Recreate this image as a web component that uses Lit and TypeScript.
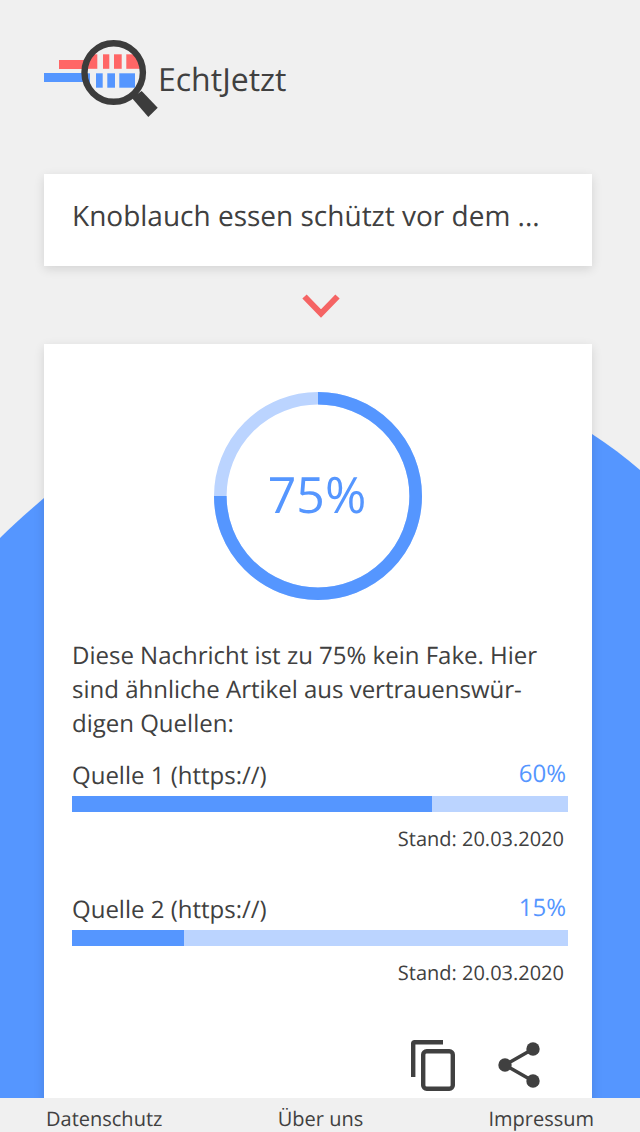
import { LitElement, html, css, svg } from 'lit';
import { customElement } from 'lit/decorators.js';

const sources = [
  { name: 'Quelle 1 (https://)', score: 60, fill: 72.6, date: '20.03.2020' },
  { name: 'Quelle 2 (https://)', score: 15, fill: 22.6, date: '20.03.2020' },
];

const logo = svg`
  <svg class="logo" width="116" height="80" viewBox="44 38 116 80">
    <defs>
      <clipPath id="lens"><circle cx="113.7" cy="72.5" r="28"></circle></clipPath>
    </defs>
    <rect x="59" y="60" width="30" height="9" fill="#f66"></rect>
    <rect x="44" y="73" width="44" height="9" fill="#5596ff"></rect>
    <circle cx="113.7" cy="72.5" r="29" fill="#f0f0f0"></circle>
    <g clip-path="url(#lens)">
      <rect x="84" y="54.3" width="13.3" height="14.5" fill="#f66"></rect>
      <rect x="103" y="54.3" width="6.3" height="14.5" fill="#f66"></rect>
      <rect x="114" y="54.3" width="7.7" height="14.5" fill="#f66"></rect>
      <rect x="126.3" y="54.3" width="20" height="14.5" fill="#f66"></rect>
      <rect x="84" y="73.3" width="6" height="14.4" fill="#5596ff"></rect>
      <rect x="96" y="73.3" width="6.7" height="14.4" fill="#5596ff"></rect>
      <rect x="107.3" y="73.3" width="7.7" height="14.4" fill="#5596ff"></rect>
      <rect x="119.3" y="73.3" width="15.7" height="14.4" fill="#5596ff"></rect>
    </g>
    <circle cx="113.7" cy="72.5" r="29.2" fill="none" stroke="#3c3c3c" stroke-width="6.4"></circle>
    <path d="M131.7 97.7 L141.7 91 L157.7 107.7 L148.3 117 Z" fill="#3c3c3c"></path>
  </svg>
`;

@customElement('app-root')
export class AppRoot extends LitElement {
  static styles = css`
    :host {
      display: flex;
      flex-direction: column;
      position: relative;
      height: 100vh;
      overflow: hidden;
      background: #f0f0f0;
      color: #404040;
      font-family: 'Open Sans', sans-serif;
      text-rendering: geometricPrecision;
    }
    .backdrop {
      position: absolute;
      inset: 0;
    }
    .main {
      position: relative;
      flex: 1;
      min-height: 0;
      overflow: hidden;
      padding: 38px 48px 0 44px;
    }
    .brand {
      display: flex;
      align-items: center;
      height: 80px;
    }
    .logo {
      display: block;
      flex: none;
    }
    .brand-name {
      margin-left: -2px;
      padding-top: 4px;
      font-size: 32px;
      line-height: 44px;
    }
    .query {
      box-sizing: border-box;
      margin-top: 56px;
      height: 92px;
      padding: 0 28px 8px 28px;
      display: flex;
      align-items: center;
      background: #fff;
      font-size: 28px;
      box-shadow: 0 3px 10px rgba(0, 0, 0, 0.12);
    }
    .chevron {
      display: block;
      margin: 28px 0 0 258px;
    }
    .result {
      box-sizing: border-box;
      margin-top: 26px;
      height: 760px;
      padding: 48px 24px 0 28px;
      background: #fff;
      box-shadow: 0 3px 10px rgba(0, 0, 0, 0.12);
    }
    .gauge {
      position: relative;
      width: 208px;
      height: 208px;
      margin-left: 142px;
    }
    .gauge svg {
      display: block;
    }
    .gauge-value {
      position: absolute;
      inset: 0 2px 4px 0;
      display: flex;
      align-items: center;
      justify-content: center;
      color: #5596ff;
      font-size: 50px;
    }
    .summary {
      margin: 39px 0 0;
      font-size: 24px;
      line-height: 34px;
    }
    .source {
      margin-top: 19px;
      height: 120px;
    }
    .source + .source {
      margin-top: 14px;
    }
    .source-head {
      display: flex;
      justify-content: space-between;
      align-items: flex-start;
      padding-right: 2px;
      font-size: 24px;
      line-height: 32px;
    }
    .score {
      color: #5596ff;
      line-height: 28px;
    }
    .bar {
      height: 16px;
      margin-top: 4px;
      background: #bbd4ff;
    }
    .bar-fill {
      height: 100%;
      background: #5596ff;
    }
    .date {
      margin-top: 13px;
      padding-right: 4px;
      text-align: right;
      font-size: 20px;
      line-height: 28px;
    }
    .actions {
      display: flex;
      justify-content: flex-end;
      align-items: flex-start;
      gap: 43px;
      margin-top: 26px;
      padding-right: 28px;
    }
    .share {
      margin-top: 2px;
    }
    .footer {
      box-sizing: border-box;
      position: relative;
      flex: none;
      height: 34px;
      padding: 8px 46px 0 46px;
      display: grid;
      grid-template-columns: 1fr auto 1fr;
      background: #f0f0f0;
      font-size: 20px;
      line-height: 26px;
    }
    .footer span:last-child {
      text-align: right;
    }
    .footer span:nth-child(2) {
      margin-left: 1px;
    }
  `;

  render() {
    return html`
      <svg class="backdrop" width="640" height="1132" viewBox="0 0 640 1132">
        <path d="M0 538 C14 524 29 511 44 498 L592 434 C609 445 625 457 640 470 V1132 H0 Z" fill="#5596ff"></path>
      </svg>
      <div class="main">
        <div class="brand">${logo}<span class="brand-name">EchtJetzt</span></div>
        <div class="query">Knoblauch essen schützt vor dem ...</div>
        <svg class="chevron" width="38" height="24" viewBox="0 0 38 24">
          <path d="M2.5 2.5 L19 19.5 L35.5 2.5" fill="none" stroke="#f56464" stroke-width="6"></path>
        </svg>
        <div class="result">
          <div class="gauge">
            <svg width="208" height="208" viewBox="0 0 208 208">
              <circle cx="104" cy="104" r="97.7" fill="none" stroke="#bbd4ff" stroke-width="12.6"></circle>
              <path d="M104 6.3 A97.7 97.7 0 1 1 6.3 104" fill="none" stroke="#5596ff" stroke-width="12.6"></path>
            </svg>
            <div class="gauge-value">75%</div>
          </div>
          <p class="summary">Diese Nachricht ist zu 75% kein Fake. Hier sind ähnliche Artikel aus vertrauenswür-digen Quellen:</p>
          ${sources.map(
            (s) => html`
              <div class="source">
                <div class="source-head">
                  <span>${s.name}</span><span class="score">${s.score}%</span>
                </div>
                <div class="bar"><div class="bar-fill" style="width: ${s.fill}%"></div></div>
                <div class="date">Stand: ${s.date}</div>
              </div>
            `,
          )}
          <div class="actions">
            <svg width="44" height="51" viewBox="0 0 44 51">
              <path d="M2.2 37 V3.5 Q2.2 2.2 3.5 2.2 H32" fill="none" stroke="#404040" stroke-width="4.4"></path>
              <rect x="12.2" y="11.2" width="29.6" height="37.6" rx="3.5" fill="none" stroke="#404040" stroke-width="4.4"></rect>
            </svg>
            <svg class="share" width="42" height="46" viewBox="0 0 42 46">
              <path d="M35 7 L7 23 L35 39" fill="none" stroke="#404040" stroke-width="3.6"></path>
              <circle cx="35" cy="7" r="6.7" fill="#404040"></circle>
              <circle cx="7" cy="23" r="6.7" fill="#404040"></circle>
              <circle cx="35" cy="39" r="6.7" fill="#404040"></circle>
            </svg>
          </div>
        </div>
      </div>
      <div class="footer">
        <span>Datenschutz</span><span>Über uns</span><span>Impressum</span>
      </div>
    `;
  }
}
